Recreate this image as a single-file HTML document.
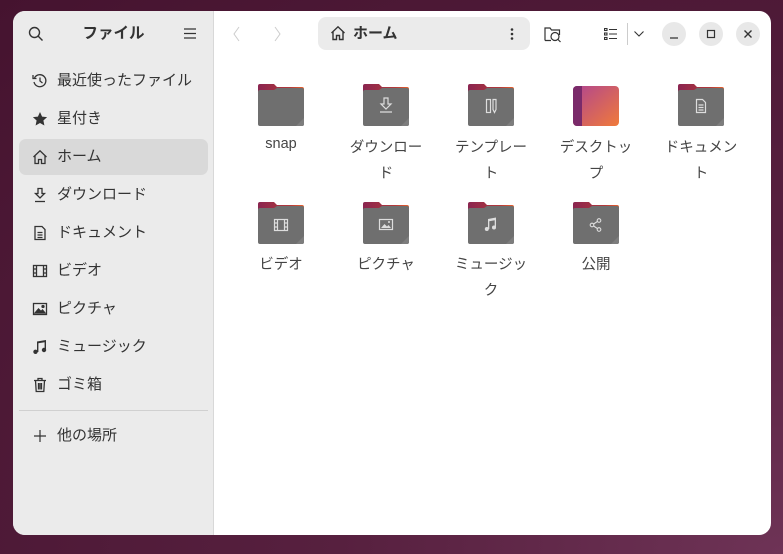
<!DOCTYPE html>
<html><head><meta charset="utf-8"><style>
*{margin:0;padding:0;box-sizing:border-box}
body{width:783px;height:554px;overflow:hidden;background:radial-gradient(ellipse at 100% 100%,#6e3356 0%,#57203f 40%,#45132f 100%);font-family:"Liberation Sans","Noto Sans CJK JP",sans-serif;color:#333;position:relative}
.win{position:absolute;left:13px;top:11px;width:758px;height:524px;border-radius:12px;overflow:hidden;background:#fff}
.side{position:absolute;left:0;top:0;width:201px;height:524px;background:#ebebeb;border-right:1px solid #d8d8d8}
.abs{position:absolute}
.row{position:absolute;left:6px;width:189px;height:36px;border-radius:7px;font-size:15px;line-height:36px;padding-left:38px;color:#333}
.row svg{position:absolute;left:13px;top:10px}
.sel{background:#d9d9d9}
.item{position:absolute;width:90px;text-align:center;font-size:14.5px;line-height:26px;color:#444}
.fold{position:absolute;width:46px;height:42px}
.cb{position:absolute;top:11px;width:24px;height:24px;border-radius:50%;background:#e8e8e8}
</style></head><body>
<div class="win">
<div class="side">
 <svg class="abs" style="left:15px;top:15px" width="16" height="16" viewBox="0 0 16 16" fill="none" stroke="#333" stroke-width="1.4"><circle cx="6.5" cy="6.5" r="5"/><path d="M10 10l4.5 4.5"/></svg>
 <div class="abs" style="left:0;width:201px;top:12px;text-align:center;font-weight:bold;font-size:15.5px;line-height:22px">ファイル</div>
 <svg class="abs" style="left:171px;top:17px" width="12" height="11" viewBox="0 0 12 11" stroke="#333" stroke-width="1.2"><path d="M0 1h12M0 5.5h12M0 10h12"/></svg>
 <div class="row" style="top:52px"><svg width="16" height="16" viewBox="0 0 16 16" fill="none" stroke="#333" stroke-width="1.3"><path d="M2.5 5A6 6 0 1 1 2 9"/><path d="M1 2v3.5h3.5"/><path d="M8 4.5V8l2.5 2"/></svg>最近使ったファイル</div>
 <div class="row" style="top:90px"><svg width="16" height="16" viewBox="0 0 16 16"><path d="M8 1l2.1 4.6 5 .5-3.7 3.4 1 5L8 12l-4.4 2.5 1-5L.9 6.1l5-.5z" fill="#333"/></svg>星付き</div>
 <div class="row sel" style="top:128px"><svg width="16" height="16" viewBox="0 0 16 16" fill="none" stroke="#333" stroke-width="1.3"><path d="M1.5 8L8 1.8 14.5 8M3 6.5V14.5h3.5v-4h3v4H13V6.5"/></svg>ホーム</div>
 <div class="row" style="top:166px"><svg width="16" height="16" viewBox="0 0 16 16" fill="none" stroke="#333" stroke-width="1.3"><path d="M6 1.5h4v5h2.5L8 11 3.5 6.5H6z"/><path d="M3 14.5h10"/></svg>ダウンロード</div>
 <div class="row" style="top:204px"><svg width="16" height="16" viewBox="0 0 16 16" fill="none" stroke="#333" stroke-width="1.3"><path d="M3 1.5h7l3 3v10H3z"/><path d="M5.5 7.5h5M5.5 10h5M5.5 12.5h5"/></svg>ドキュメント</div>
 <div class="row" style="top:242px"><svg width="16" height="16" viewBox="0 0 16 16" fill="none" stroke="#333" stroke-width="1.3"><rect x="1.5" y="2.5" width="13" height="11"/><path d="M4.5 2.5v11M11.5 2.5v11M1.5 6h3M1.5 10h3M11.5 6h3M11.5 10h3"/></svg>ビデオ</div>
 <div class="row" style="top:280px"><svg width="16" height="16" viewBox="0 0 16 16" fill="none" stroke="#333" stroke-width="1.3"><rect x="1.5" y="2.5" width="13" height="11"/><path d="M3 12l3.5-4 2.5 2.5 1.5-1.5 2.5 3z" fill="#333"/><circle cx="11" cy="5.5" r="1" fill="#333"/></svg>ピクチャ</div>
 <div class="row" style="top:318px"><svg width="16" height="16" viewBox="0 0 16 16" fill="#333"><path d="M5 2.5l9-1.5v10h-1.4V3.2L6.4 4.2V13H5z"/><circle cx="3.5" cy="12.8" r="2.2"/><circle cx="12" cy="11" r="2.2"/></svg>ミュージック</div>
 <div class="row" style="top:356px"><svg width="16" height="16" viewBox="0 0 16 16" fill="none" stroke="#333" stroke-width="1.3"><path d="M2 3.5h12M6 3.5V1.5h4v2M3.5 3.5l.7 11h7.6l.7-11M6.5 6v6.5M8 6v6.5M9.5 6v6.5"/></svg>ゴミ箱</div>
 <div class="abs" style="left:6px;top:399px;width:189px;height:1px;background:#d0d0d0"></div>
 <div class="row" style="top:407px"><svg width="16" height="16" viewBox="0 0 16 16" stroke="#333" stroke-width="1.2"><path d="M8 2v12M2 8h12"/></svg>他の場所</div>
</div>
<!-- header -->
<svg class="abs" style="left:219px;top:15px" width="10" height="16" viewBox="0 0 10 16" fill="none" stroke="#ccc" stroke-width="1"><path d="M7 1L2 8l5 7"/></svg>
<svg class="abs" style="left:259px;top:15px" width="10" height="16" viewBox="0 0 10 16" fill="none" stroke="#ccc" stroke-width="1"><path d="M3 1l5 7-5 7"/></svg>
<div class="abs" style="left:305px;top:6px;width:212px;height:33px;background:#ebebeb;border-radius:8px"></div>
<svg class="abs" style="left:317px;top:14px" width="16" height="16" viewBox="0 0 16 16" fill="none" stroke="#333" stroke-width="1.4"><path d="M1.5 8L8 1.8 14.5 8M3 6.5V14.5h3.5v-4h3v4H13V6.5"/></svg>
<div class="abs" style="left:340px;top:12px;font-size:15px;font-weight:bold;line-height:22px">ホーム</div>
<svg class="abs" style="left:497px;top:16px" width="4" height="14" viewBox="0 0 4 14" fill="#333"><circle cx="2" cy="2.5" r="1.3"/><circle cx="2" cy="7" r="1.3"/><circle cx="2" cy="11.5" r="1.3"/></svg>
<svg class="abs" style="left:531px;top:15px" width="18" height="17" viewBox="0 0 18 17" fill="none" stroke="#333" stroke-width="1.2"><path d="M1 14.5V2h5l1.5 2h8v5"/><path d="M1 14.5h6"/><circle cx="11" cy="10.5" r="4"/><path d="M14 13.5l2.5 2.5"/></svg>
<svg class="abs" style="left:591px;top:17px" width="13" height="12" viewBox="0 0 13 12" fill="none" stroke="#333" stroke-width="1.1"><rect x=".5" y=".5" width="2.5" height="2"/><rect x=".5" y="5" width="2.5" height="2"/><rect x=".5" y="9.5" width="2.5" height="2"/><path d="M5 1.5h8M5 6h8M5 10.5h8"/></svg>
<div class="abs" style="left:614px;top:12px;width:1px;height:22px;background:#ccc"></div>
<svg class="abs" style="left:620px;top:19px" width="12" height="8" viewBox="0 0 12 8" fill="none" stroke="#333" stroke-width="1.1"><path d="M1.5 1.5L6 6l4.5-4.5"/></svg>
<div class="cb" style="left:649px"><svg width="24" height="24" viewBox="0 0 24 24" stroke="#333" stroke-width="1.2"><path d="M8 16h8"/></svg></div>
<div class="cb" style="left:686px"><svg width="24" height="24" viewBox="0 0 24 24" fill="none" stroke="#333" stroke-width="1.2"><rect x="8.5" y="8.5" width="7" height="7"/></svg></div>
<div class="cb" style="left:723px"><svg width="24" height="24" viewBox="0 0 24 24" stroke="#333" stroke-width="1.4"><path d="M8.5 8.5l7 7M15.5 8.5l-7 7"/></svg></div>
<!-- folders -->
<svg width="0" height="0" style="position:absolute"><defs>
<linearGradient id="tab" x1="0" x2="1"><stop offset="0" stop-color="#8a2550"/><stop offset=".7" stop-color="#b33a3a"/><stop offset="1" stop-color="#e8622c"/></linearGradient>
<linearGradient id="desk" x1="0" x2="1" y1="0" y2="1"><stop offset="0" stop-color="#b04590"/><stop offset="1" stop-color="#f07a3a"/></linearGradient>
<g id="f"><path d="M2 0h14l3 3h25a2 2 0 0 1 2 2v8H0V2a2 2 0 0 1 2-2z" fill="url(#tab)"/><path d="M2 6h14l3-2h25a2 2 0 0 1 2 2v34a2 2 0 0 1-2 2H2a2 2 0 0 1-2-2V8a2 2 0 0 1 2-2z" fill="#6f6f6f"/><path d="M46 34v6a2 2 0 0 1-2 2h-6z" fill="#7d7d7d"/></g>
</defs></svg>
<div class="fold" style="left:245px;top:73px"><svg width="46" height="42"><use href="#f"/></svg></div>
<div class="fold" style="left:350px;top:73px"><svg width="46" height="42"><use href="#f"/><g fill="none" stroke="#ddd" stroke-width="1.2"><path d="M21 14h4v6h3l-5 5-5-5h3z"/><path d="M17 28h12"/></g></svg></div>
<div class="fold" style="left:455px;top:73px"><svg width="46" height="42"><use href="#f"/><g fill="none" stroke="#ddd" stroke-width="1.2"><rect x="18.5" y="15.5" width="4" height="13"/><path d="M25 15.5h3v10l-1.5 3-1.5-3z"/></g></svg></div>
<div class="fold" style="left:560px;top:73px"><svg width="46" height="42"><rect x="0" y="2" width="46" height="40" rx="4" fill="url(#desk)"/><path d="M4 2h5v40H4a4 4 0 0 1-4-4V6a4 4 0 0 1 4-4z" fill="#7a2a6a"/></svg></div>
<div class="fold" style="left:665px;top:73px"><svg width="46" height="42"><use href="#f"/><g fill="none" stroke="#ddd" stroke-width="1.2"><path d="M18.5 15.5h6l3 3v10h-9z"/><path d="M20.5 21h5M20.5 23.5h5M20.5 26h5"/></g></svg></div>
<div class="fold" style="left:245px;top:191px"><svg width="46" height="42"><use href="#f"/><g fill="none" stroke="#ddd" stroke-width="1.2"><rect x="16.5" y="17.5" width="13" height="11"/><path d="M19.5 17.5v11M26.5 17.5v11M16.5 21h3M16.5 25h3M26.5 21h3M26.5 25h3"/></g></svg></div>
<div class="fold" style="left:350px;top:191px"><svg width="46" height="42"><use href="#f"/><rect x="16.5" y="17.5" width="13" height="10" fill="none" stroke="#ddd" stroke-width="1.2"/><path d="M18 26l3.5-4 2.5 2.5 1.5-1.5 2.5 3z" fill="#ddd"/><circle cx="26" cy="20" r="1" fill="#ddd"/></svg></div>
<div class="fold" style="left:455px;top:191px"><svg width="46" height="42"><use href="#f"/><g fill="#ddd"><path d="M20 17l8-1.5v10h-1.3v-7.3l-5.4 1V27H20z"/><circle cx="18.8" cy="27" r="2"/><circle cx="26" cy="25.5" r="2"/></g></svg></div>
<div class="fold" style="left:560px;top:191px"><svg width="46" height="42"><use href="#f"/><g fill="none" stroke="#ddd" stroke-width="1.1"><circle cx="19" cy="23" r="1.8"/><circle cx="26" cy="18.5" r="1.8"/><circle cx="26" cy="27.5" r="1.8"/><path d="M20.6 22l3.8-2.5M20.6 24l3.8 2.5"/></g></svg></div>
<!-- labels -->
<div class="item" style="left:223px;top:120px">snap</div>
<div class="item" style="left:328px;top:124px">ダウンロー<br>ド</div>
<div class="item" style="left:433px;top:124px">テンプレー<br>ト</div>
<div class="item" style="left:538px;top:124px">デスクトッ<br>プ</div>
<div class="item" style="left:643px;top:124px">ドキュメン<br>ト</div>
<div class="item" style="left:223px;top:241px">ビデオ</div>
<div class="item" style="left:328px;top:241px">ピクチャ</div>
<div class="item" style="left:433px;top:241px">ミュージッ<br>ク</div>
<div class="item" style="left:538px;top:241px">公開</div>
</div>
</body></html>
